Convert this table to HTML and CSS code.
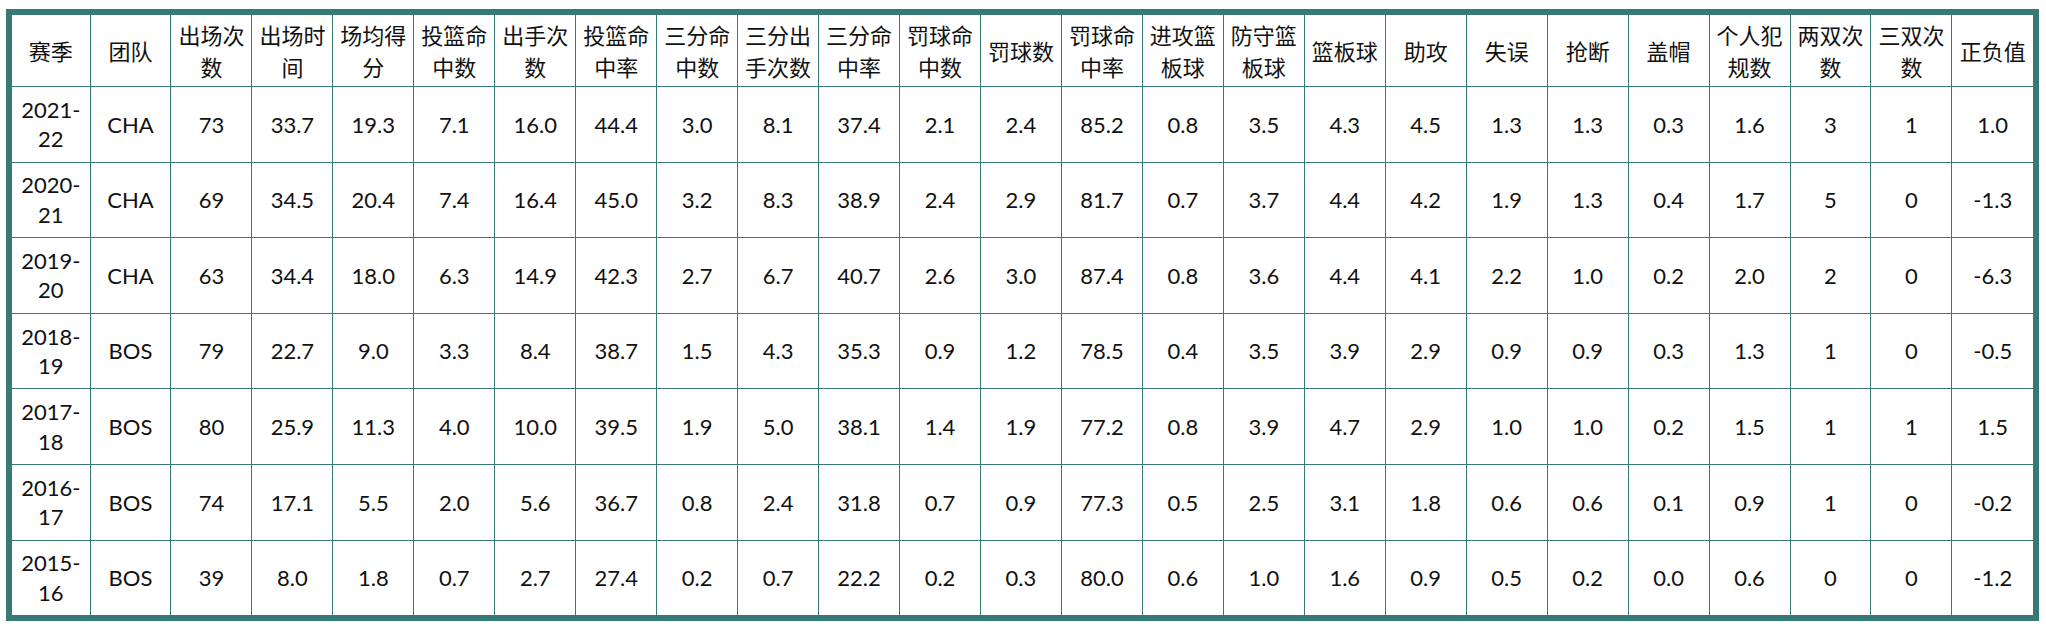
FILE: index.html
```html
<!DOCTYPE html>
<html lang="zh-CN">
<head>
<meta charset="utf-8">
<title>球员赛季数据</title>
<link rel="stylesheet" href="styles.css">
</head>
<body>
<div class="frame">
<table class="stats">
<colgroup><col class="c-season"></colgroup>
<thead>
<tr>
<th>赛季</th><th>团队</th><th>出场次数</th><th>出场时间</th><th>场均得分</th><th>投篮命中数</th><th>出手次数</th><th>投篮命中率</th><th>三分命中数</th><th>三分出手次数</th><th>三分命中率</th><th>罚球命中数</th><th>罚球数</th><th>罚球命中率</th><th>进攻篮板球</th><th>防守篮板球</th><th>篮板球</th><th>助攻</th><th>失误</th><th>抢断</th><th>盖帽</th><th>个人犯规数</th><th>两双次数</th><th>三双次数</th><th>正负值</th>
</tr>
</thead>
<tbody>
<tr><td>2021-22</td><td>CHA</td><td>73</td><td>33.7</td><td>19.3</td><td>7.1</td><td>16.0</td><td>44.4</td><td>3.0</td><td>8.1</td><td>37.4</td><td>2.1</td><td>2.4</td><td>85.2</td><td>0.8</td><td>3.5</td><td>4.3</td><td>4.5</td><td>1.3</td><td>1.3</td><td>0.3</td><td>1.6</td><td>3</td><td>1</td><td>1.0</td></tr>
<tr><td>2020-21</td><td>CHA</td><td>69</td><td>34.5</td><td>20.4</td><td>7.4</td><td>16.4</td><td>45.0</td><td>3.2</td><td>8.3</td><td>38.9</td><td>2.4</td><td>2.9</td><td>81.7</td><td>0.7</td><td>3.7</td><td>4.4</td><td>4.2</td><td>1.9</td><td>1.3</td><td>0.4</td><td>1.7</td><td>5</td><td>0</td><td>-1.3</td></tr>
<tr><td>2019-20</td><td>CHA</td><td>63</td><td>34.4</td><td>18.0</td><td>6.3</td><td>14.9</td><td>42.3</td><td>2.7</td><td>6.7</td><td>40.7</td><td>2.6</td><td>3.0</td><td>87.4</td><td>0.8</td><td>3.6</td><td>4.4</td><td>4.1</td><td>2.2</td><td>1.0</td><td>0.2</td><td>2.0</td><td>2</td><td>0</td><td>-6.3</td></tr>
<tr><td>2018-19</td><td>BOS</td><td>79</td><td>22.7</td><td>9.0</td><td>3.3</td><td>8.4</td><td>38.7</td><td>1.5</td><td>4.3</td><td>35.3</td><td>0.9</td><td>1.2</td><td>78.5</td><td>0.4</td><td>3.5</td><td>3.9</td><td>2.9</td><td>0.9</td><td>0.9</td><td>0.3</td><td>1.3</td><td>1</td><td>0</td><td>-0.5</td></tr>
<tr><td>2017-18</td><td>BOS</td><td>80</td><td>25.9</td><td>11.3</td><td>4.0</td><td>10.0</td><td>39.5</td><td>1.9</td><td>5.0</td><td>38.1</td><td>1.4</td><td>1.9</td><td>77.2</td><td>0.8</td><td>3.9</td><td>4.7</td><td>2.9</td><td>1.0</td><td>1.0</td><td>0.2</td><td>1.5</td><td>1</td><td>1</td><td>1.5</td></tr>
<tr><td>2016-17</td><td>BOS</td><td>74</td><td>17.1</td><td>5.5</td><td>2.0</td><td>5.6</td><td>36.7</td><td>0.8</td><td>2.4</td><td>31.8</td><td>0.7</td><td>0.9</td><td>77.3</td><td>0.5</td><td>2.5</td><td>3.1</td><td>1.8</td><td>0.6</td><td>0.6</td><td>0.1</td><td>0.9</td><td>1</td><td>0</td><td>-0.2</td></tr>
<tr><td>2015-16</td><td>BOS</td><td>39</td><td>8.0</td><td>1.8</td><td>0.7</td><td>2.7</td><td>27.4</td><td>0.2</td><td>0.7</td><td>22.2</td><td>0.2</td><td>0.3</td><td>80.0</td><td>0.6</td><td>1.0</td><td>1.6</td><td>0.9</td><td>0.5</td><td>0.2</td><td>0.0</td><td>0.6</td><td>0</td><td>0</td><td>-1.2</td></tr>
</tbody>
</table>
</div>
</body>
</html>
```
FILE: styles.css
```css
html, body {
  background: #ffffff;
}
body {
  margin: 9px 0 0 6px;
  font-family: Lato, "Noto Sans CJK SC", sans-serif;
  color: #111111;
}
.frame {
  width: 2021px;
  border: 6px solid #377a75;
}
.stats {
  width: 100%;
  table-layout: fixed;
  border-collapse: collapse;
  font-size: 22px;
}
.c-season {
  width: 78px;
}
.stats th,
.stats td {
  border: 1px solid #377a75;
  padding: 0 6px;
  text-align: center;
  vertical-align: middle;
  font-weight: 400;
}
.stats th {
  height: 71px;
  line-height: 31.5px;
  font-family: "Noto Sans CJK SC", sans-serif;
}
.stats td {
  height: 74.6px;
  line-height: 29.5px;
}
.stats tr > :first-child { border-left: 0; }
.stats tr > :last-child { border-right: 0; }
.stats thead tr > * { border-top: 0; }
.stats tbody tr:last-child > * { border-bottom: 0; }
```
